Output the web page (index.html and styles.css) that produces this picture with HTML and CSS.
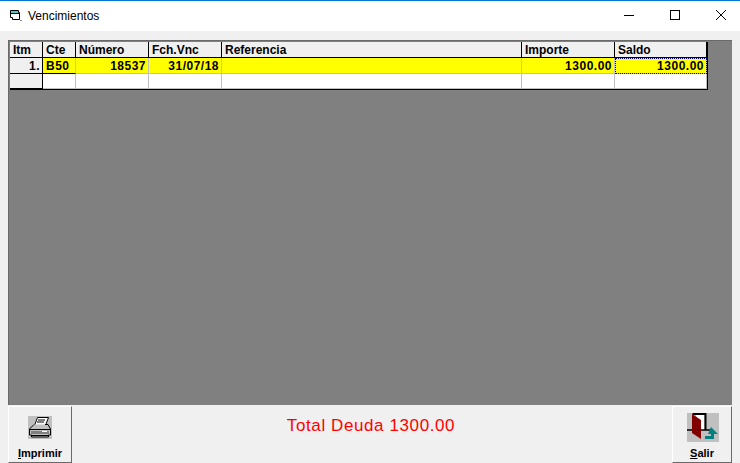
FILE: index.html
```html
<!DOCTYPE html>
<html lang="es">
<head>
  <meta charset="UTF-8">
  <meta name="viewport" content="width=device-width, initial-scale=1.0">
  <title>Vencimientos</title>
  <link rel="stylesheet" href="styles.css">
</head>
<body>

  <header class="titlebar">
    <svg class="app-icon" width="16" height="16" viewBox="0 0 16 16">
      <path d="M2.5 2.5h8v2h1v7h-7v-2h-2z" fill="#fff" stroke="#000" stroke-width="1"/>
      <path d="M3 3h7v2H3z" fill="#3fd0d0"/>
      <path d="M3 5.500h8" stroke="#000"/>
      <path d="M12 12h2v1h-2z" fill="#888"/>
    </svg>
    <span class="title">Vencimientos</span>
    <div class="window-buttons">
      <svg width="46" height="30" viewBox="0 0 46 30"><path d="M18 14.500h10" stroke="#000"/></svg>
      <svg width="46" height="30" viewBox="0 0 46 30"><rect x="18.500" y="9.500" width="9" height="9" fill="none" stroke="#000"/></svg>
      <svg width="46" height="30" viewBox="0 0 46 30"><path d="M18 9l10 10M28 9L18 19" stroke="#000"/></svg>
    </div>
  </header>

  <main class="content">
    <div class="grid-panel">
      <div class="grid">
        <div class="head">Itm</div>
        <div class="head">Cte</div>
        <div class="head">Número</div>
        <div class="head">Fch.Vnc</div>
        <div class="head">Referencia</div>
        <div class="head">Importe</div>
        <div class="head">Saldo</div>

        <div class="stub num">1.</div>
        <div class="cell yellow fixed">B50</div>
        <div class="cell yellow num">18537</div>
        <div class="cell yellow num">31/07/18</div>
        <div class="cell yellow"></div>
        <div class="cell yellow num">1300.00</div>
        <div class="cell yellow num current">1300.00</div>

        <div class="stub"></div>
        <div class="cell"></div>
        <div class="cell"></div>
        <div class="cell"></div>
        <div class="cell"></div>
        <div class="cell"></div>
        <div class="cell"></div>
      </div>
    </div>

    <div class="footer">
      <button class="tool-btn print-btn">
        <svg width="24" height="23" viewBox="0 0 24 23">
          <rect width="24" height="23" fill="#c0c0c0"/>
          <path d="M9.500 1.500h11l-3 8h-11z" fill="#fff" stroke="#000"/>
          <path d="M10 4h7M9 6h7" stroke="#000"/>
          <path d="M6 8.500l-4.500 4.500v6h2v2h17v-2h2v-6l-2.500-4.500h-3" fill="#c0c0c0" stroke="#000"/>
          <path d="M1.500 13.500h21" stroke="#000"/>
          <path d="M3 16.500h18" stroke="#808080" stroke-width="3"/>
          <path d="M14 15.500h5" stroke="#fff"/>
          <path d="M4 19.500h16" stroke="#000"/>
        </svg>
        <span><u>I</u>mprimir</span>
      </button>
      <div class="total">Total Deuda 1300.00</div>
      <button class="tool-btn exit-btn">
        <svg width="32" height="29" viewBox="0 0 32 29">
          <rect width="32" height="29" fill="#c0c0c0"/>
          <path d="M5.500 1h13v16" fill="none" stroke="#000" stroke-width="2"/>
          <path d="M9 2h8v15h-3z" fill="#fff"/>
          <path d="M0 17h23" stroke="#000" stroke-width="1.500"/>
          <path d="M5 1l9 6v19l-9-6z" fill="#800000"/>
          <path d="M10 16.500h3" stroke="#000"/>
          <path d="M24 14l7 7h-4v5H18v-3h6v-2h-3z" fill="#008080"/>
        </svg>
        <span><u>S</u>alir</span>
      </button>
    </div>
  </main>

</body>
</html>
```

FILE: styles.css
```css
html, body {
  margin: 0;
  padding: 0;
}
body {
  width: 740px;
  height: 463px;
  overflow: hidden;
  background-color: #f0f0f0;
  font-family: "Liberation Sans", Arial, sans-serif;
}
.titlebar {
  display: flex;
  align-items: center;
  height: 30px;
  background-color: white;
  border-top: 1px solid #0078d7;
  padding-left: 8px;
}
.app-icon {
  flex: none;
}
.title {
  margin-left: 4px;
  font-size: 12px;
  color: #000;
}
.window-buttons {
  display: flex;
  margin-left: auto;
  margin-right: -4px;
}
.content {
  display: flex;
  flex-direction: column;
  height: 432px;
  padding: 9px 8px 0;
  box-sizing: border-box;
}
.grid-panel {
  height: 365px;
  flex: none;
  padding: 2px;
  box-sizing: border-box;
  background-color: #808080;
  border-top: 1px solid #696969;
  border-left: 1px solid #696969;
}
.grid {
  display: grid;
  grid-template-columns: 33px 33px 73px 73px 300px 93px 92px;
  grid-template-rows: 16px 16px 15px;
  width: 697px;
  margin: -1px 0 0 -1px;
  border-right: 1px solid #000;
  border-bottom: 1px solid #000;
  background-color: white;
  font-size: 12px;
  font-weight: bold;
  line-height: 14px;
  color: #000;
}
.grid > div {
  box-sizing: border-box;
  padding: 1px 2px 0 3px;
  white-space: nowrap;
  overflow: hidden;
}
.head {
  background-color: #f0f0f0;
  border-right: 1px solid #000;
  border-bottom: 1px solid #000;
}
.stub {
  background-color: #f0f0f0;
  border-right: 1px solid #000;
  border-bottom: 1px solid #000;
  letter-spacing: 0.5px;
}
.cell {
  border-right: 1px solid #c0c0c0;
  border-bottom: 1px solid #c0c0c0;
  letter-spacing: 0.5px;
}
.fixed {
  border-bottom-color: #000;
}
.yellow {
  background-color: #ffff00;
}
.num {
  text-align: right;
}
.current {
  outline: 1px dotted #000080;
  outline-offset: -1px;
}
.footer {
  display: flex;
  flex: 1;
  align-items: flex-start;
  margin-top: 1px;
}
.tool-btn {
  display: flex;
  flex: none;
  flex-direction: column;
  align-items: center;
  box-sizing: border-box;
  height: 57px;
  padding: 0;
  background-color: #f0f0f0;
  border: 1px solid;
  border-color: #fff #696969 #696969 #fff;
  font-family: "Liberation Sans", Arial, sans-serif;
  font-size: 11px;
  font-weight: bold;
  color: #000;
}
.print-btn {
  width: 64px;
  padding-top: 9px;
}
.print-btn span {
  margin-top: 8px;
}
.exit-btn {
  width: 60px;
  padding-top: 6px;
}
.exit-btn svg {
  margin-left: 1px;
}
.exit-btn span {
  margin-top: 5px;
}
.total {
  flex: 1;
  text-align: center;
  padding: 10px 2px 0 0;
  font-size: 17px;
  letter-spacing: 0.6px;
  color: #ff0000;
}
```
